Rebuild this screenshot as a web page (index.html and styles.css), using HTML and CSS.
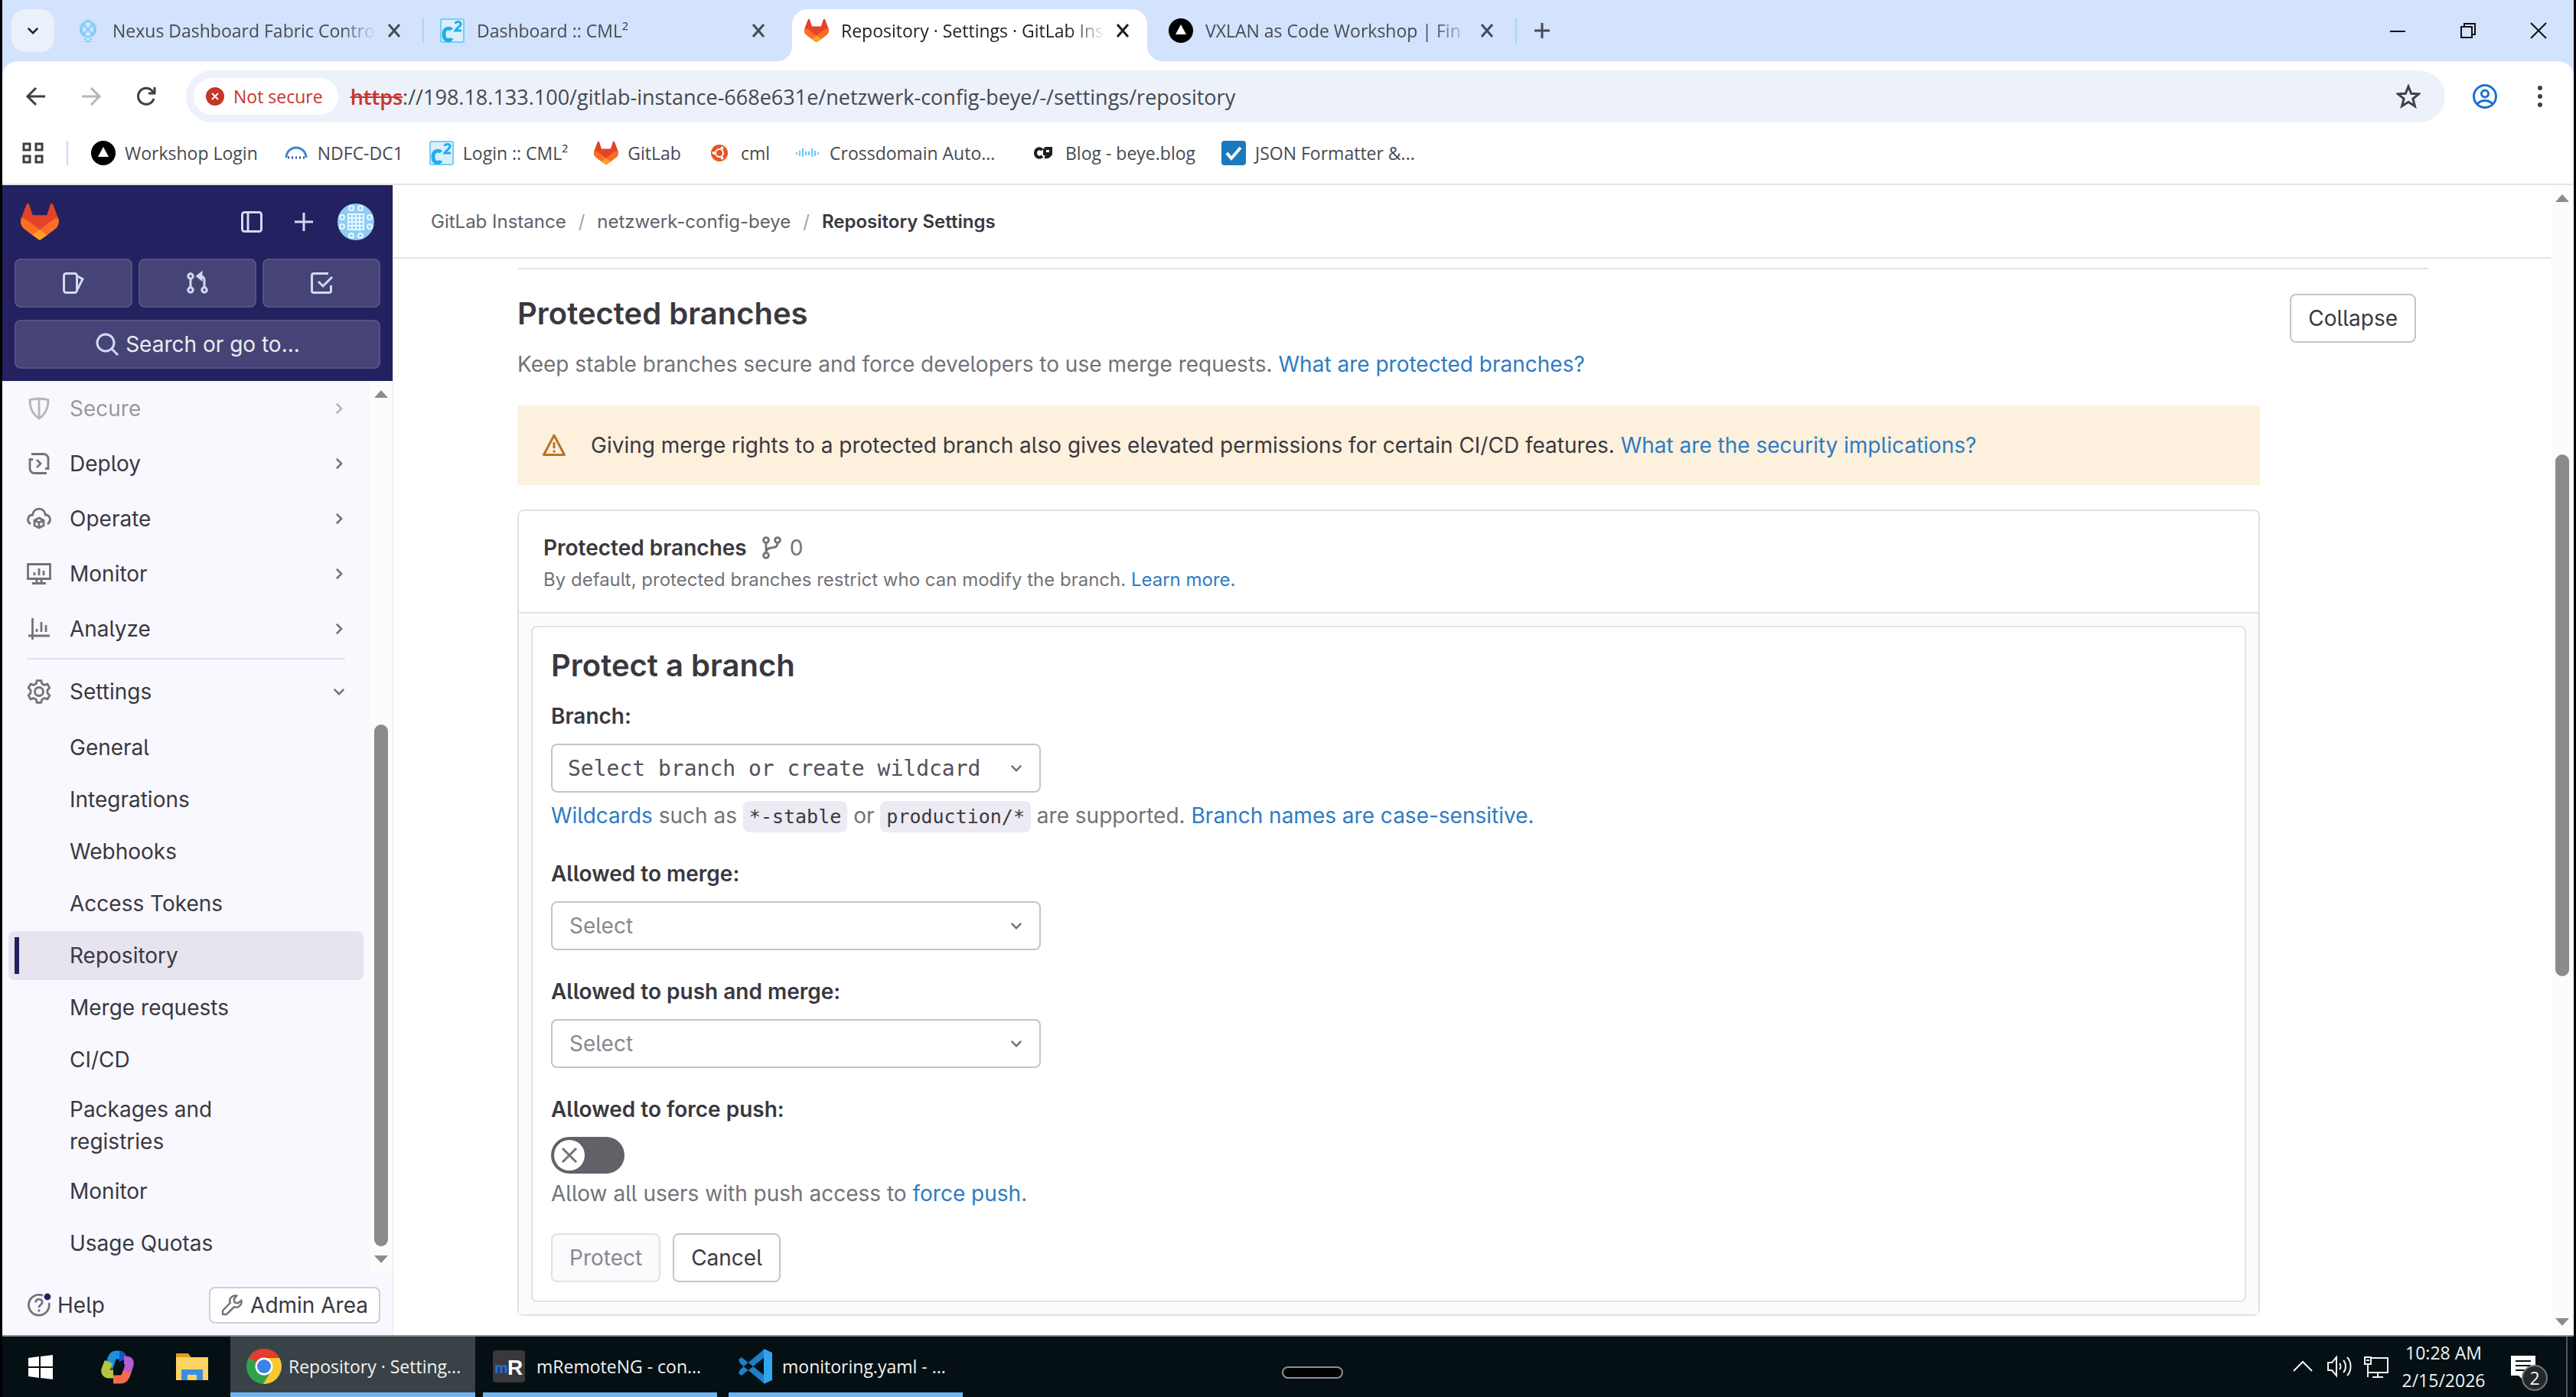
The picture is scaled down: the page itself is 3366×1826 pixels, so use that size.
FILE: index.html
```html
<!DOCTYPE html>
<html lang="en">
<head>
  <meta charset="utf-8">
  <title>Repository · Settings · GitLab Instance</title>
  <link rel="stylesheet" href="styles.css">
</head>
<body>
  <!-- Shared icons -->
  <svg class="defs" width="0" height="0">
    <symbol id="close" viewBox="0 0 24 24"><path d="M5 4l14 16M19 4L5 20" stroke="currentColor" stroke-width="3"/></symbol>
    <symbol id="tanuki" viewBox="0 0 25 24">
      <path fill="#e24329" d="M24.5 9.5l-.03-.09L21.08.56a.9.9 0 0 0-1.7.09l-2.29 7.01H7.83L5.54.65A.9.9 0 0 0 3.84.56L.45 9.4l-.03.1a6.3 6.3 0 0 0 2.09 7.28l5.17 3.87 4.78 3.3 4.8-3.3 5.15-3.87A6.3 6.3 0 0 0 24.5 9.5z"/>
      <path fill="#fc6d26" d="M24.5 9.5l-.03-.09a11.4 11.4 0 0 0-4.56 2.05l-7.45 5.63L5 11.46A11.4 11.4 0 0 0 .45 9.4l-.03.1a6.3 6.3 0 0 0 2.09 7.28l5.17 3.87 4.78 3.3 4.8-3.3 5.15-3.87A6.3 6.3 0 0 0 24.5 9.5z"/>
      <path fill="#fca326" d="M7.7 20.67l4.76 3.3 4.8-3.3-4.8-3.58z"/>
    </symbol>
    <symbol id="delta" viewBox="0 0 32 32"><circle cx="16" cy="16" r="16"/><path fill="#fff" d="M16 8l7 13H9z"/></symbol>
    <symbol id="cml" viewBox="0 0 32 32">
      <rect x="1" y="1" width="30" height="30" rx="2" fill="#d9effc" stroke="#79cdf5" stroke-width="2"/>
      <path d="M15 15c-2-3-10-3-10 6s8 9 10 5" fill="none" stroke="#1eaeea" stroke-width="5"/>
      <path d="M20 7c1-4 8-3 7 1-1 3-5 4-7 8h8" fill="none" stroke="#1eaeea" stroke-width="3"/>
    </symbol>
    <symbol id="right" viewBox="0 0 16 16"><path d="M5.5 3l5 5-5 5" fill="none" stroke="currentColor" stroke-width="2"/></symbol>
    <symbol id="down" viewBox="0 0 16 16"><path d="M3 5.5l5 5 5-5" fill="none" stroke="currentColor" stroke-width="2"/></symbol>
  </svg>

  <header class="tabs">
    <button class="tab-search" aria-label="Search tabs"><svg class="i20"><use href="#down"/></svg></button>
    <div class="tab">
      <svg class="i32" viewBox="0 0 32 32" fill="none" stroke="#7fcdf3" stroke-width="2"><circle cx="16" cy="14" r="10"/><path d="M10 8l12 13M22 8L10 21M12 6a10 10 0 0 0 0 16M20 6a10 10 0 0 1 0 16M11 27h3M18 27h3M12 30h8M13 3h6"/></svg>
      <span class="tab-title">Nexus Dashboard Fabric Contro</span>
      <button class="icon-btn" aria-label="Close tab"><svg class="i24"><use href="#close"/></svg></button>
    </div>
    <span class="tab-sep"></span>
    <div class="tab">
      <svg class="i32"><use href="#cml"/></svg>
      <span class="tab-title">Dashboard :: CML²</span>
      <button class="icon-btn" aria-label="Close tab"><svg class="i24"><use href="#close"/></svg></button>
    </div>
    <span class="tab-sep hidden"></span>
    <div class="tab active">
      <svg class="i32"><use href="#tanuki"/></svg>
      <span class="tab-title">Repository · Settings · GitLab Ins</span>
      <button class="icon-btn" aria-label="Close tab"><svg class="i24"><use href="#close"/></svg></button>
    </div>
    <span class="tab-sep hidden"></span>
    <div class="tab">
      <svg class="i32"><use href="#delta"/></svg>
      <span class="tab-title">VXLAN as Code Workshop | Fin</span>
      <button class="icon-btn" aria-label="Close tab"><svg class="i24"><use href="#close"/></svg></button>
    </div>
    <span class="tab-sep"></span>
    <button class="icon-btn new-tab" aria-label="New tab"><svg class="i24" viewBox="0 0 24 24"><path d="M12 2v20M2 12h20" stroke="currentColor" stroke-width="3"/></svg></button>
    <div class="window-buttons">
      <button aria-label="Minimize"><svg class="i24" viewBox="0 0 24 24"><path d="M2 13h20" stroke="#111" stroke-width="2"/></svg></button>
      <button aria-label="Restore"><svg class="i24" viewBox="0 0 24 24" fill="none" stroke="#111" stroke-width="2"><path d="M3 7h14v14H3zM7 7V3h14v14h-4"/></svg></button>
      <button aria-label="Close"><svg class="i24" viewBox="0 0 24 24"><path d="M2 2l20 20M22 2L2 22" stroke="#111" stroke-width="2"/></svg></button>
    </div>
  </header>

  <div class="browser-bar">
    <div class="toolbar">
      <button class="tool" aria-label="Back"><svg class="i28" viewBox="0 0 28 28"><path d="M26 14H3M14 3L3 14l11 11" fill="none" stroke="#3c4043" stroke-width="3"/></svg></button>
      <button class="tool" aria-label="Forward"><svg class="i28" viewBox="0 0 28 28"><path d="M2 14h23M14 3l11 11-11 11" fill="none" stroke="#b5b6b8" stroke-width="3"/></svg></button>
      <button class="tool" aria-label="Reload"><svg class="i28" viewBox="0 0 28 28"><path d="M24 17a10.500 10.500 0 1 1-2-10l3 3M25 2v8h-8" fill="none" stroke="#3c4043" stroke-width="3"/></svg></button>
      <div class="omnibox">
        <button class="not-secure"><svg class="i24" viewBox="0 0 24 24"><circle cx="12" cy="12" r="12" fill="#c5362b"/><path d="M8 8l8 8M16 8l-8 8" stroke="#fff" stroke-width="2"/></svg>Not secure</button>
        <label class="scheme" for="url">https</label>
        <input class="url" id="url" type="text" value="://198.18.133.100/gitlab-instance-668e631e/netzwerk-config-beye/-/settings/repository">
        <button class="icon-btn" aria-label="Bookmark this tab"><svg class="i32" viewBox="0 0 32 32"><path d="M16 3l3.700 9.200 9.800.6-7.600 6.200 2.500 9.700L16 23.300l-8.400 5.400L10.100 19l-7.600-6.200 9.800-.6z" fill="none" stroke="#3c4043" stroke-width="3"/></svg></button>
      </div>
      <button class="tool profile" aria-label="Profile"><svg class="i32" viewBox="0 0 32 32" fill="none" stroke="#1a73d0" stroke-width="3"><circle cx="16" cy="16" r="14.500"/><circle cx="16" cy="12.500" r="4.500"/><path d="M6 26c5-6 15-6 20 0"/></svg></button>
      <button class="tool" aria-label="Menu"><svg class="i32" viewBox="0 0 32 32" fill="#3c4043"><circle cx="16" cy="5" r="3"/><circle cx="16" cy="16" r="3"/><circle cx="16" cy="27" r="3"/></svg></button>
    </div>
    <nav class="bookmarks">
      <svg class="i28" viewBox="0 0 28 28" fill="none" stroke="#3c4043" stroke-width="3"><path d="M2 2h8v8H2zM18 2h8v8h-8zM2 18h8v8H2zM18 18h8v8h-8z"/></svg>
      <span class="mark-sep"></span>
      <a href="#"><svg class="i32"><use href="#delta"/></svg>Workshop Login</a>
      <a href="#"><svg class="i32" viewBox="0 0 32 32" fill="none" stroke-width="3"><path d="M3 22a13 13 0 0 1 26 0" stroke="#3e85cf"/><path d="M5 22h24" stroke="#2f4d9c" stroke-dasharray="2 3"/></svg>NDFC-DC1</a>
      <a href="#"><svg class="i32"><use href="#cml"/></svg>Login :: CML²</a>
      <a href="#"><svg class="i32"><use href="#tanuki"/></svg>GitLab</a>
      <a href="#"><svg class="i32" viewBox="0 0 32 32"><circle cx="16" cy="16" r="11" fill="#e95420"/><circle cx="16" cy="16" r="5" fill="none" stroke="#fff" stroke-width="2"/><g fill="#fff"><circle cx="8.500" cy="16" r="2"/><circle cx="19.500" cy="9.500" r="2"/><circle cx="19.500" cy="22.500" r="2"/></g></svg>cml</a>
      <a class="clipped" href="#"><svg class="i32" viewBox="0 0 32 32" stroke="#6cc4ef" stroke-width="2"><path d="M1 15v3M5 13v7M9 10v11M13 14v5M17 14v5M21 10v11M25 13v7M29 15v3"/></svg>Crossdomain Auto...</a>
      <a href="#"><svg class="i32" viewBox="0 0 32 32" fill="none" stroke="#1c1c22" stroke-width="4"><path d="M14 12c-5-4-9 0-9 4s4 8 9 4M17 10h8v7h-8v-7M25 12c0 8-3 10-8 9"/></svg>Blog - beye.blog</a>
      <a href="#"><svg class="i32" viewBox="0 0 32 32"><rect width="32" height="32" rx="4" fill="#1c79c0"/><path d="M7 16l6 7L25 9" fill="none" stroke="#fff" stroke-width="4"/></svg>JSON Formatter &amp;...</a>
    </nav>
  </div>

  <div class="page">
    <aside class="sidebar">
      <div class="super-bar">
        <div class="brand-row">
          <svg class="brand"><use href="#tanuki"/></svg>
          <button class="super-icon" aria-label="Hide sidebar"><svg class="i32" viewBox="0 0 16 16"><rect x="1.750" y="1.750" width="12.500" height="12.500" rx="1.500"/><path d="M5.500 2v12"/></svg></button>
          <button class="super-icon" aria-label="Create new"><svg class="i32" viewBox="0 0 16 16"><path d="M8 2v12M2 8h12"/></svg></button>
          <svg class="avatar" viewBox="0 0 48 48">
            <circle cx="24" cy="24" r="24" fill="#8fcdf3"/>
            <g fill="none" stroke="#e9f8fe" stroke-width="2">
              <circle cx="18" cy="6" r="3"/><circle cx="30" cy="6" r="3"/><circle cx="18" cy="42" r="3"/><circle cx="30" cy="42" r="3"/>
              <circle cx="6" cy="18" r="3"/><circle cx="6" cy="30" r="3"/><circle cx="42" cy="18" r="3"/><circle cx="42" cy="30" r="3"/>
              <path d="M14 14h20v20H14zM19 14v20M24 14v20M29 14v20M14 19h20M14 24h20M14 29h20"/>
            </g>
          </svg>
        </div>
        <div class="counts">
          <button aria-label="Issues"><svg class="i32" viewBox="0 0 16 16"><rect x="1.750" y="1.750" width="8.500" height="12.500" rx="1.500"/><path d="M10.500 3.500l3.500 1.800-3.500 7"/></svg></button>
          <button aria-label="Merge requests"><svg class="i32" viewBox="0 0 16 16"><circle cx="3.500" cy="3.500" r="1.600"/><circle cx="3.500" cy="12.500" r="1.600"/><circle cx="12.500" cy="12.500" r="1.600"/><path d="M3.500 5v6M12.500 11V6c0-1.500-1-2.500-3-2.500M10.500 1.500l-2.500 2 2.500 2z"/></svg></button>
          <button aria-label="To-Do list"><svg class="i32" viewBox="0 0 16 16"><path d="M12.500 1.750H3a1.250 1.250 0 0 0-1.250 1.250v10c0 .7.550 1.250 1.250 1.250h10c.7 0 1.250-.55 1.250-1.250V9.500M6 7l3 3 6-6"/></svg></button>
        </div>
        <button class="search"><svg class="i32" viewBox="0 0 16 16"><circle cx="7" cy="7" r="5.500"/><path d="M11 11l4 4"/></svg>Search or go to...</button>
      </div>

      <div class="nav-wrap">
        <nav class="side-nav">
          <a class="item faded" href="#"><svg class="i32 glyph" viewBox="0 0 16 16"><path d="M8 1.500c2 0 4 .2 6 .8 0 6-2 9.700-6 12.200-4-2.500-6-6.200-6-12.200 2-.6 4-.8 6-.8zM8 2v12"/></svg><span>Secure</span><svg class="i20"><use href="#right"/></svg></a>
          <a class="item" href="#"><svg class="i32 glyph" viewBox="0 0 16 16"><path d="M3 1.750h8a3 3 0 0 1 3 3v6.500h-2M13 14.250H5a3 3 0 0 1-3-3v-6h2M6.500 5.500L9 8l-2.500 2.500"/></svg><span>Deploy</span><svg class="i20"><use href="#right"/></svg></a>
          <a class="item" href="#"><svg class="i32 glyph" viewBox="0 0 16 16"><path d="M2.500 11.500C-.5 9.500.8 5.500 3.800 5.500 4.500.2 11.500.2 12.200 5.500c3 0 4.300 4 1.300 6M8 7.500l3 1.500v3.500L8 14l-3-1.500V9zM5 9l3 1.500L11 9M8 10.500V14"/></svg><span>Operate</span><svg class="i20"><use href="#right"/></svg></a>
          <a class="item" href="#"><svg class="i32 glyph" viewBox="0 0 16 16"><path d="M.75 1.750h14.500v9.500H.75zM6.500 11.500V14M9.500 11.500V14M3.500 14.250h9M5 7v2M8 4.500V9M11 6v3"/></svg><span>Monitor</span><svg class="i20"><use href="#right"/></svg></a>
          <a class="item" href="#"><svg class="i32 glyph" viewBox="0 0 16 16"><path d="M3.750 1v14M1 12.500h14M6.500 8v2M9.500 3.500V10M12.500 5.500V10"/></svg><span>Analyze</span><svg class="i20"><use href="#right"/></svg></a>
          <hr>
          <a class="item" href="#"><svg class="i32 glyph" viewBox="0 0 16 16"><circle cx="8" cy="8" r="2.750"/><path d="M6.600.8h2.800l.5 2 1.600.9 2-.6 1.400 2.400-1.400 1.500v2l1.400 1.500-1.400 2.400-2-.6-1.600.9-.5 2H6.600l-.5-2-1.600-.9-2 .6L1.100 10.500 2.500 9V7L1.100 5.500l1.400-2.400 2 .6 1.600-.9z"/></svg><span>Settings</span><svg class="i20"><use href="#down"/></svg></a>
          <div class="sub-nav">
            <a href="#">General</a>
            <a href="#">Integrations</a>
            <a href="#">Webhooks</a>
            <a href="#">Access Tokens</a>
            <a class="current" href="#">Repository</a>
            <a href="#">Merge requests</a>
            <a href="#">CI/CD</a>
            <a href="#">Packages and registries</a>
            <a href="#">Monitor</a>
            <a href="#">Usage Quotas</a>
          </div>
        </nav>
        <div class="scrollbar side-scroll"><i class="arrow-up"></i><i class="thumb"></i><i class="arrow-down"></i></div>
      </div>

      <div class="side-footer">
        <button class="help"><svg class="i32 glyph" viewBox="0 0 16 16"><path d="M10.500 1.700A6.700 6.700 0 1 0 14.500 6.500M5.800 6.200c0-3 4.500-2.700 4.300 0C10 7.700 8 7.700 8 9.500M8 10.800v1.400"/><circle class="dot" cx="13.500" cy="2.500" r="1.500"/></svg>Help</button>
        <a class="admin" href="#"><svg class="i28 glyph" viewBox="0 0 16 16"><path d="M11.500 1a4 4 0 0 0-4.800 5.300L1.200 12v2.800H4l5.700-5.500A4 4 0 0 0 15 4.500l-2.500 2-2.500-.5-.5-2.500z"/></svg>Admin Area</a>
      </div>
    </aside>

    <main class="main">
      <nav class="breadcrumbs">
        <a href="#">GitLab Instance</a><span>/</span><a href="#">netzwerk-config-beye</a><span>/</span><strong>Repository Settings</strong>
      </nav>
      <section class="settings">
        <div class="settings-header">
          <h2>Protected branches</h2>
          <button class="btn">Collapse</button>
        </div>
        <div class="settings-content">
          <p class="desc">Keep stable branches secure and force developers to use merge requests. <a href="#">What are protected branches?</a></p>
          <div class="alert">
            <svg class="i32" viewBox="0 0 16 16" fill="none" stroke="#b87521" stroke-width="1.500" stroke-linejoin="round"><path d="M8 1.500l6.750 12.750H1.250zM8 6v4M8 11.200v1.500"/></svg>
            <p>Giving merge rights to a protected branch also gives elevated permissions for certain CI/CD features. <a href="#">What are the security implications?</a></p>
          </div>
          <div class="card">
            <div class="card-head">
              <div class="card-title"><strong>Protected branches</strong>
                <svg class="i32 glyph" viewBox="0 0 16 16"><circle cx="4.500" cy="3" r="1.700"/><circle cx="12" cy="3" r="1.700"/><circle cx="4.500" cy="13" r="1.700"/><path d="M4.500 4.800v6.400M12 4.700c0 3-2 3-4 3.300-2 .2-3.500 1-3.500 3"/></svg><span>0</span>
              </div>
              <p>By default, protected branches restrict who can modify the branch. <a href="#">Learn more.</a></p>
            </div>
            <div class="card-body">
              <form class="protect-form">
                <h3>Protect a branch</h3>
                <div class="field">
                  <label for="branch">Branch:</label>
                  <div class="select mono">
                    <select id="branch"><option>Select branch or create wildcard</option></select>
                    <svg class="i20"><use href="#down"/></svg>
                  </div>
                  <p class="hint"><a href="#">Wildcards</a> such as <code>*-stable</code> or <code>production/*</code> are supported. <a href="#">Branch names are case-sensitive.</a></p>
                </div>
                <div class="field">
                  <label for="merge">Allowed to merge:</label>
                  <div class="select">
                    <select id="merge"><option>Select</option></select>
                    <svg class="i20"><use href="#down"/></svg>
                  </div>
                </div>
                <div class="field">
                  <label for="push">Allowed to push and merge:</label>
                  <div class="select">
                    <select id="push"><option>Select</option></select>
                    <svg class="i20"><use href="#down"/></svg>
                  </div>
                </div>
                <div class="field">
                  <label for="force">Allowed to force push:</label>
                  <div class="toggle">
                    <input type="checkbox" id="force">
                    <svg viewBox="0 0 40 40"><circle cx="20" cy="20" r="20" fill="#fff"/><path d="M11 11l18 18M29 11L11 29" stroke="#737278" stroke-width="3"/></svg>
                  </div>
                  <p class="hint">Allow all users with push access to <a href="#">force push</a>.</p>
                </div>
                <div class="actions">
                  <button class="btn" type="submit" disabled>Protect</button>
                  <button class="btn" type="button">Cancel</button>
                </div>
              </form>
            </div>
          </div>
        </div>
      </section>
    </main>
    <div class="scrollbar page-scroll"><i class="arrow-up"></i><i class="thumb"></i><i class="arrow-down"></i></div>
  </div>

  <footer class="taskbar">
    <button class="launch" aria-label="Start"><svg class="i36" viewBox="0 0 36 36" fill="#fff"><path d="M2 6l14-2v13H2zM18 4l16-2v15H18zM2 19h14v13L2 30zM18 19h16v15l-16-2z"/></svg></button>
    <button class="launch" aria-label="Copilot"><svg class="i48" viewBox="0 0 48 48" fill="none" stroke-width="11" stroke-linejoin="round"><path d="M14 25l4-12c1-3 2-5 6-5h5" stroke="#1d8fe0"/><path d="M28 8c4 0 4 4 5 7" stroke="#1b54c4"/><path d="M14 17l-4 10c-1 4 1 6 4 6h6" stroke="#b3c63c"/><path d="M34 15h2c5 0 6 2 5 6l-3 10" stroke="#b65bd0"/><path d="M38 30c-2 7-4 10-9 10h-9" stroke="#f36b4c"/></svg></button>
    <button class="launch" aria-label="File Explorer"><svg class="i48" viewBox="0 0 48 48"><path fill="#e0a020" d="M3 6h16l4 6H3z"/><path fill="#fcd462" d="M3 11h42v30H3z"/><path fill="#3c8fe0" d="M10 27h28v14h-8v-7H18v7h-8z"/></svg></button>
    <button class="task active"><svg class="i48" viewBox="0 0 48 48"><circle cx="24" cy="24" r="23" fill="#31a24c"/><path fill="#e23d2e" d="M24 24L4 12.500a23 23 0 0 1 40 0z"/><path fill="#fbc72f" d="M24 13h20a23 23 0 0 1-21 34l11-18z"/><circle cx="24" cy="24" r="11.500" fill="#fff"/><circle cx="24" cy="24" r="9" fill="#3c82e8"/></svg>Repository · Setting...</button>
    <button class="task"><svg class="i48" viewBox="0 0 48 48"><rect x="3" y="3" width="42" height="42" rx="4" fill="#3a383c"/><text x="5" y="33" class="m">m</text><text x="22" y="35" class="r">R</text></svg>mRemoteNG - con...</button>
    <button class="task"><svg class="i48" viewBox="0 0 48 48"><path fill="#1c7fc8" d="M3 15l4-3 30 24-1 10-31-26zM3 33l4 3L37 12 36 2 5 28z"/><path fill="#30a5ee" d="M36 1l11 5v36l-11 5z"/></svg>monitoring.yaml - ...</button>
    <span class="handle"></span>
    <div class="tray">
      <svg class="i32" viewBox="0 0 32 32"><path d="M4 22l12-12 12 12"/></svg>
      <svg class="i32" viewBox="0 0 32 32"><path d="M1 11h5l6-7v24l-6-7H1zM16 12c2 2 2 6 0 8M21 8c4 4 4 12 0 16M26 4c6 6 6 18 0 24"/></svg>
      <svg class="i32" viewBox="0 0 32 32"><path d="M9 5h22v19H5M1 4h8v9H1zM5 13v17M18 24v6M11 30h14M3 8h4"/></svg>
      <div class="clock"><span>10:28 AM</span><span>2/15/2026</span></div>
      <div class="notice"><svg class="i32" viewBox="0 0 32 32"><path class="bubble" d="M0 2h32v26H18l-4 4-4-4H0z"/><path class="lines" d="M6 9h20M6 15h20M6 21h20"/></svg><span>2</span></div>
    </div>
  </footer>
</body>
</html>
```
FILE: styles.css
```css
* {
  box-sizing: border-box;
}
body {
  margin: 0;
  padding: 0 3px;
  height: 100vh;
  display: flex;
  flex-direction: column;
  background: #000;
  color: #3a383f;
  font-family: Inter, sans-serif;
  font-size: 28px;
  font-feature-settings: "cv05";
  overflow: hidden;
}
button, input, select {
  font: inherit;
  font-feature-settings: inherit;
  color: inherit;
  padding: 0;
  border: none;
  background: none;
}
button {
  display: flex;
  align-items: center;
  justify-content: center;
}
a {
  color: #2f7bc4;
  text-decoration: none;
}
p, h2, h3 {
  margin: 0;
}
svg {
  flex: none;
  display: block;
}
.defs {
  position: absolute;
}
.i20 { width: 20px; height: 20px; }
.i24 { width: 24px; height: 24px; }
.i28 { width: 28px; height: 28px; }
.i32 { width: 32px; height: 32px; }
.i36 { width: 36px; height: 36px; }
.i48 { width: 48px; height: 48px; }

/* Browser tabs */
.tabs, .browser-bar, .taskbar {
  font-family: "Open Sans", "Noto Sans", sans-serif;
  font-size: 23px;
  font-feature-settings: normal;
}
.tabs {
  display: flex;
  align-items: center;
  height: 80px;
  padding-left: 12px;
  background: #d3e2fd;
  color: #474b52;
}
.tab-search {
  width: 56px;
  height: 56px;
  margin-right: 12px;
  border-radius: 18px;
  background: #eaf1fb;
  color: #1f1f1f;
}
.tab {
  display: flex;
  align-items: center;
  width: 464px;
  height: 56px;
  padding: 0 20px 0 16px;
}
.tab-title {
  flex: 1;
  margin: 0 8px 0 16px;
  white-space: nowrap;
  mask-image: linear-gradient(to right, #000 86%, transparent 99%);
}
.tab.active {
  position: relative;
  align-self: flex-end;
  height: 68px;
  padding-bottom: 12px;
  background: #fff;
  border-radius: 20px 20px 0 0;
  color: #1f1f1f;
}
.tab.active::before, .tab.active::after {
  content: "";
  position: absolute;
  bottom: 0;
  width: 20px;
  height: 20px;
}
.tab.active::before {
  right: 100%;
  background: radial-gradient(circle at 0 0, transparent 20px, #fff 20px);
}
.tab.active::after {
  left: 100%;
  background: radial-gradient(circle at 100% 0, transparent 20px, #fff 20px);
}
.tab-sep {
  width: 2px;
  height: 32px;
  margin: 0 5px;
  background: #9fd8f6;
}
.tab-sep.hidden {
  visibility: hidden;
}
.new-tab {
  margin-left: 16px;
}
.window-buttons {
  display: flex;
  margin-left: auto;
}
.window-buttons button {
  width: 92px;
  height: 80px;
}

/* Address bar and bookmarks */
.browser-bar {
  background: linear-gradient(#d3e2fd 20px, #fff 20px);
}
.toolbar {
  display: flex;
  align-items: center;
  padding: 12px 8px 0;
  border-radius: 20px 20px 0 0;
  background: #fff;
}
.tool {
  width: 72px;
  height: 68px;
}
.omnibox {
  flex: 1;
  display: flex;
  align-items: center;
  height: 68px;
  margin: 0 16px;
  padding: 0 32px 0 10px;
  border-radius: 34px;
  background: #edf1fa;
  font-size: 27px;
}
.not-secure {
  height: 48px;
  padding: 0 20px 0 16px;
  gap: 12px;
  border-radius: 24px;
  background: #fff;
  color: #c5362b;
  font-size: 23px;
}
.scheme {
  margin-left: 16px;
  color: #c5362b;
  text-decoration: line-through;
}
.url {
  flex: 1;
  color: #45484d;
}
.bookmarks {
  display: flex;
  align-items: center;
  gap: 34px;
  height: 82px;
  padding: 0 26px;
  border-bottom: 2px solid #e4e4e4;
  background: #fff;
}
.bookmarks a {
  display: flex;
  align-items: center;
  gap: 12px;
  color: #474a4f;
}
.bookmarks .clipped {
  width: 274px;
}
.mark-sep {
  width: 2px;
  height: 32px;
  margin: 0 -4px;
  background: #c3dcf7;
}

/* Page */
.page {
  flex: 1;
  min-height: 0;
  display: flex;
  background: #fff;
}
.sidebar {
  width: 511px;
  display: flex;
  flex-direction: column;
  border-right: 1px solid #e6e5ee;
  background: #f8f8fe;
}
.super-bar {
  display: flex;
  flex-direction: column;
  gap: 16px;
  padding: 24px 16px 16px;
  background: #232160;
}
.super-bar svg {
  fill: none;
  stroke: #cfdcf0;
  stroke-width: 1.5;
}
.super-bar .brand, .super-bar .avatar {
  stroke: none;
}
.brand-row {
  display: flex;
  align-items: center;
  height: 48px;
  margin: 0 8px 8px;
}
.brand {
  width: 50px;
  height: 50px;
  margin-right: auto;
}
.super-icon {
  width: 68px;
}
.avatar {
  width: 48px;
  height: 48px;
  margin-left: 10px;
}
.counts {
  display: flex;
  gap: 8px;
}
.counts button, .search {
  flex: 1;
  height: 64px;
  border: 2px solid #55537f;
  border-radius: 8px;
  background: #464477;
}
.search {
  flex: none;
  gap: 8px;
  color: #ececef;
}
.nav-wrap {
  flex: 1;
  min-height: 0;
  display: flex;
}
.side-nav {
  flex: 1;
  padding: 2px 8px 0;
  overflow: hidden;
}
.side-nav a, .side-footer a {
  color: #3a383f;
}
.item {
  display: flex;
  align-items: center;
  height: 68px;
  margin-bottom: 4px;
  padding: 0 22px 0 24px;
}
.item span {
  flex: 1;
  margin-left: 24px;
}
.item > .i20 {
  color: #737278;
}
.item.faded {
  opacity: 0.5;
}
.glyph {
  fill: none;
  stroke: #737278;
  stroke-width: 1.4;
}
hr {
  height: 2px;
  margin: 4px 24px 8px;
  border: none;
  background: #e2e2ef;
}
.sub-nav {
  display: flex;
  flex-direction: column;
  gap: 4px;
  margin-top: 7px;
}
.sub-nav a {
  min-height: 64px;
  padding: 8px 140px 8px 80px;
  border-radius: 8px;
  line-height: 42px;
}
.sub-nav a:not(:nth-child(8)) {
  line-height: 48px;
}
.sub-nav .current {
  background: #e7e4ef linear-gradient(#232160, #232160) no-repeat 8px 8px / 6px 48px;
}
.scrollbar {
  display: flex;
  flex-direction: column;
  align-items: center;
  background: #fcfcfb;
}
.scrollbar .arrow-up, .scrollbar .arrow-down {
  border: 9px solid transparent;
  border-top: none;
  border-bottom: 10px solid #8b8b8b;
}
.scrollbar .arrow-down {
  border-top: 10px solid #8b8b8b;
  border-bottom: none;
}
.scrollbar .thumb {
  width: 18px;
  height: 682px;
  border-radius: 9px;
  background: #8b8b8b;
}
.side-scroll {
  width: 30px;
  padding: 12px 0;
}
.side-scroll .thumb {
  margin: auto 0 12px;
}
.side-footer {
  display: flex;
  align-items: center;
  justify-content: space-between;
  height: 82px;
  padding: 4px 16px 0 32px;
}
.help {
  gap: 8px;
}
.help .dot {
  fill: #232160;
  stroke: #232160;
}
.admin {
  display: flex;
  align-items: center;
  gap: 10px;
  height: 48px;
  padding: 0 14px;
  border: 2px solid #cfced4;
  border-radius: 8px;
  background: #fff;
}

/* Main column */
.main {
  flex: 1;
  overflow: hidden;
}
.breadcrumbs {
  display: flex;
  align-items: center;
  gap: 16px;
  height: 96px;
  padding-left: 49px;
  border-bottom: 2px solid #e4e4e6;
  font-size: 24px;
}
.breadcrumbs a {
  color: #626168;
}
.breadcrumbs span {
  color: #a4a3a8;
}
.breadcrumbs strong, label, .card-title strong {
  font-weight: 600;
}
.settings {
  margin: 12px 160px 0 162px;
  border-top: 2px solid #e4e4e6;
}
.settings-header {
  display: flex;
  justify-content: space-between;
  height: 80px;
  margin-top: 32px;
  padding-right: 16px;
}
h2, h3 {
  padding-top: 2px;
  font-size: 40px;
  line-height: 48px;
  font-weight: 600;
}
.btn {
  height: 64px;
  padding: 0 22px;
  border: 2px solid #c5c4ca;
  border-radius: 8px;
  background: #fff;
}
.btn:disabled {
  border-color: #e2e1e6;
  background: #fbfafd;
  color: #89888d;
}
.settings-content {
  margin-right: 220px;
}
.desc {
  margin-top: -8px;
  line-height: 40px;
  color: #737278;
}
.alert {
  display: flex;
  align-items: center;
  gap: 32px;
  height: 104px;
  margin: 34px 0 32px;
  padding: 0 32px;
  background: #fdf1dd;
}
.card {
  border: 2px solid #e1e0e5;
  border-radius: 8px;
}
.card-head {
  padding: 28px 32px 22px;
  border-bottom: 2px solid #e1e0e5;
  line-height: 40px;
  font-size: 24px;
  color: #737278;
}
.card-title {
  display: flex;
  align-items: center;
  gap: 8px;
  margin-bottom: 2px;
  font-size: 28px;
}
.card-title strong {
  margin-right: 8px;
  color: #3a383f;
}
.card-body {
  padding: 16px;
  background: #fbfafd;
}
.protect-form {
  padding: 24px;
  border: 2px solid #e1e0e5;
  border-radius: 8px;
  background: #fff;
}
.field {
  margin: 22px 0 34px;
}
.field + .field {
  margin-top: 0;
}
.field label {
  display: block;
  margin-bottom: 16px;
  line-height: 40px;
}
.select {
  display: grid;
  align-items: center;
  width: 640px;
}
.select select, .select svg {
  grid-area: 1 / 1;
}
.select select {
  height: 64px;
  padding: 0 22px;
  border: 2px solid #c5c4ca;
  border-radius: 8px;
  background: #fff;
  color: #89888d;
  appearance: none;
}
.select svg {
  justify-self: end;
  margin-right: 22px;
  color: #737278;
}
.mono select {
  padding: 0 20px;
  color: #535158;
}
.mono select, code {
  font-family: "DejaVu Sans Mono", monospace;
}
.hint {
  margin-top: 10px;
  line-height: 40px;
  color: #737278;
}
code {
  padding: 6px 8px;
  border-radius: 8px;
  background: #ecebf3;
  color: #3a383f;
  font-size: 25px;
}
.toggle {
  display: grid;
  align-items: center;
  width: 96px;
}
.toggle input, .toggle svg {
  grid-area: 1 / 1;
}
.toggle input {
  width: 96px;
  height: 48px;
  margin: 0;
  border-radius: 24px;
  background: #626168;
  appearance: none;
}
.toggle svg {
  width: 40px;
  height: 40px;
  margin-left: 4px;
  pointer-events: none;
}
.toggle + .hint {
  margin-top: 6px;
}
.actions {
  display: flex;
  gap: 16px;
  margin-top: -2px;
}
.page-scroll {
  width: 30px;
  padding: 12px 0;
}
.page-scroll .thumb {
  margin: 330px 0 auto;
}

/* Windows taskbar */
.taskbar {
  display: flex;
  align-items: center;
  height: 81px;
  border-top: 2px solid #8d9294;
  background: #041014;
  color: #f2f2f2;
}
.launch {
  width: 99px;
  height: 100%;
}
.task {
  width: 306px;
  height: 100%;
  margin-right: 15px;
  justify-content: flex-start;
  gap: 12px;
  padding: 4px 0 0 10px;
  border-bottom: 6px solid #6fb3f0;
  white-space: nowrap;
}
.task.active {
  width: 320px;
  margin: 0 10px 0 1px;
  padding-left: 20px;
  gap: 8px;
  background: #394246;
}
.task .m {
  font: bold 20px "Liberation Sans", sans-serif;
  fill: #1e6fe0;
}
.task .r {
  font: bold 28px "Liberation Sans", sans-serif;
  fill: #fff;
}
.handle {
  width: 80px;
  height: 16px;
  margin: 14px 0 0 402px;
  border: 2px solid #8d8f9c;
  border-radius: 8px;
  background: #000;
}
.tray {
  display: flex;
  align-items: center;
  gap: 16px;
  height: 100%;
  margin-left: auto;
  margin-right: 8px;
  padding: 0 40px 2px 0;
  border-right: 2px solid #51575a;
}
.tray > svg {
  fill: none;
  stroke: #f2f2f2;
  stroke-width: 2;
}
.clock {
  display: flex;
  flex-direction: column;
  width: 112px;
  text-align: center;
  line-height: 36px;
}
.notice {
  position: relative;
  margin-left: 16px;
}
.bubble {
  fill: #fff;
}
.lines {
  stroke: #041014;
  stroke-width: 2;
}
.notice span {
  position: absolute;
  left: 14px;
  top: 14px;
  width: 34px;
  height: 34px;
  border: 2px solid #777;
  border-radius: 50%;
  background: #22282c;
  text-align: center;
  line-height: 30px;
}
```
